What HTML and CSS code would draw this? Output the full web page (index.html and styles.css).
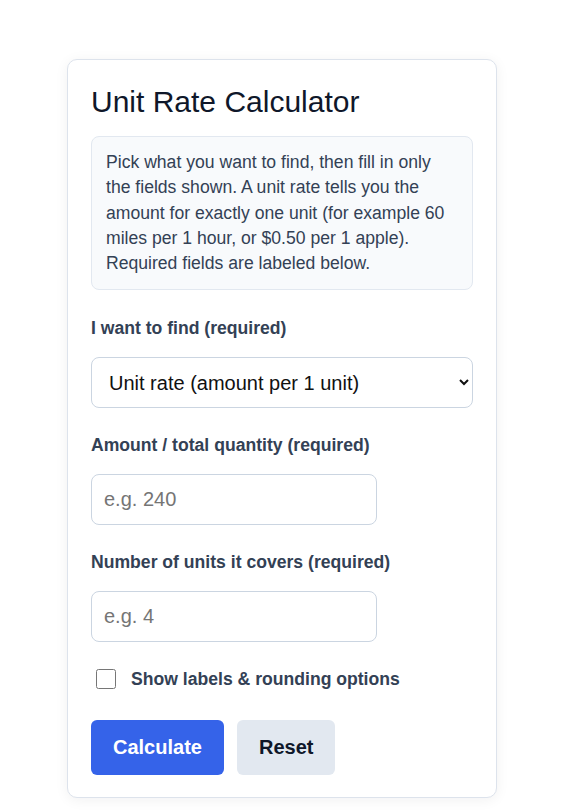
FILE: index.html
```html
<!DOCTYPE html>
<html lang="en">
<head>
    <meta charset="UTF-8">
    <title>Unit Rate Calculator</title>
    <link rel="stylesheet" href="styles.css">
</head>
<body>

    <div class="card">
        <h1>Unit Rate Calculator</h1>

        <p class="intro">
            Pick what you want to find, then fill in only the fields shown. A unit rate tells you the amount for exactly one unit (for example 60 miles per 1 hour, or $0.50 per 1 apple). Required fields are labeled below.
        </p>

        <div class="field">
            <label for="mode">I want to find (required)</label>
            <select id="mode">
                <option value="rate">Unit rate (amount per 1 unit)</option>
                <option value="total">Total amount</option>
                <option value="units">Number of units</option>
            </select>
        </div>

        <div class="field">
            <label for="amount">Amount / total quantity (required)</label>
            <input type="number" id="amount" placeholder="e.g. 240">
        </div>

        <div class="field">
            <label for="units">Number of units it covers (required)</label>
            <input type="number" id="units" placeholder="e.g. 4">
        </div>

        <div class="check-row">
            <input type="checkbox" id="show-options">
            <label for="show-options">Show labels &amp; rounding options</label>
        </div>

        <div class="buttons">
            <button id="calc-button" class="btn primary">Calculate</button>
            <button id="reset-button" class="btn secondary">Reset</button>
        </div>
    </div>

</body>
</html>
```

FILE: styles.css
```css
body {
    margin: 0;
    padding: 59px 0 40px 67px;
    font-family: "Liberation Sans", Arial, sans-serif;
    font-size: 17.6px;
    line-height: 1.5;
    background-color: #fff;
    color: #334155;
}
.card {
    box-sizing: border-box;
    width: 430px;
    padding: 24px 23px 22px;
    background-color: #fff;
    border: 1px solid #dde3ec;
    border-radius: 10px;
    box-shadow: 0 2px 14px rgba(15, 23, 42, 0.06);
}
h1 {
    margin: 0 0 16px;
    font-size: 30px;
    font-weight: normal;
    line-height: 1.2;
    color: #0f172a;
}
.intro {
    margin: 0 0 25px;
    padding: 13px 22px 13px 14px;
    line-height: 25.3px;
    background-color: #f8fafc;
    border: 1px solid #e2e8f0;
    border-radius: 8px;
}
.field {
    margin-bottom: 24px;
}
.field label {
    display: block;
    margin-bottom: 15.5px;
    font-weight: bold;
}
.field select,
.field input {
    box-sizing: border-box;
    height: 51px;
    padding: 0 12px;
    font-family: inherit;
    font-size: 20px;
    color: #111;
    background-color: #fff;
    border: 1px solid #cbd5e1;
    border-radius: 8px;
}
.field select {
    width: 100%;
    padding: 0 10px 0 13px;
}
.field input {
    width: 286px;
}
.field input::placeholder {
    color: #757575;
}
.check-row {
    display: flex;
    align-items: center;
    height: 26px;
    margin-bottom: 28px;
}
.check-row input {
    width: 20px;
    height: 20px;
    margin: 0 15px 0 5px;
}
.check-row label {
    font-weight: bold;
}
.buttons {
    display: flex;
    gap: 13px;
}
.btn {
    height: 55px;
    padding: 0 22px;
    font-family: inherit;
    font-size: 20px;
    font-weight: bold;
    border: none;
    border-radius: 6px;
    cursor: pointer;
}
.btn.primary {
    background-color: #3563e9;
    color: #fff;
}
.btn.secondary {
    background-color: #e2e8f0;
    color: #0f172a;
}
```
